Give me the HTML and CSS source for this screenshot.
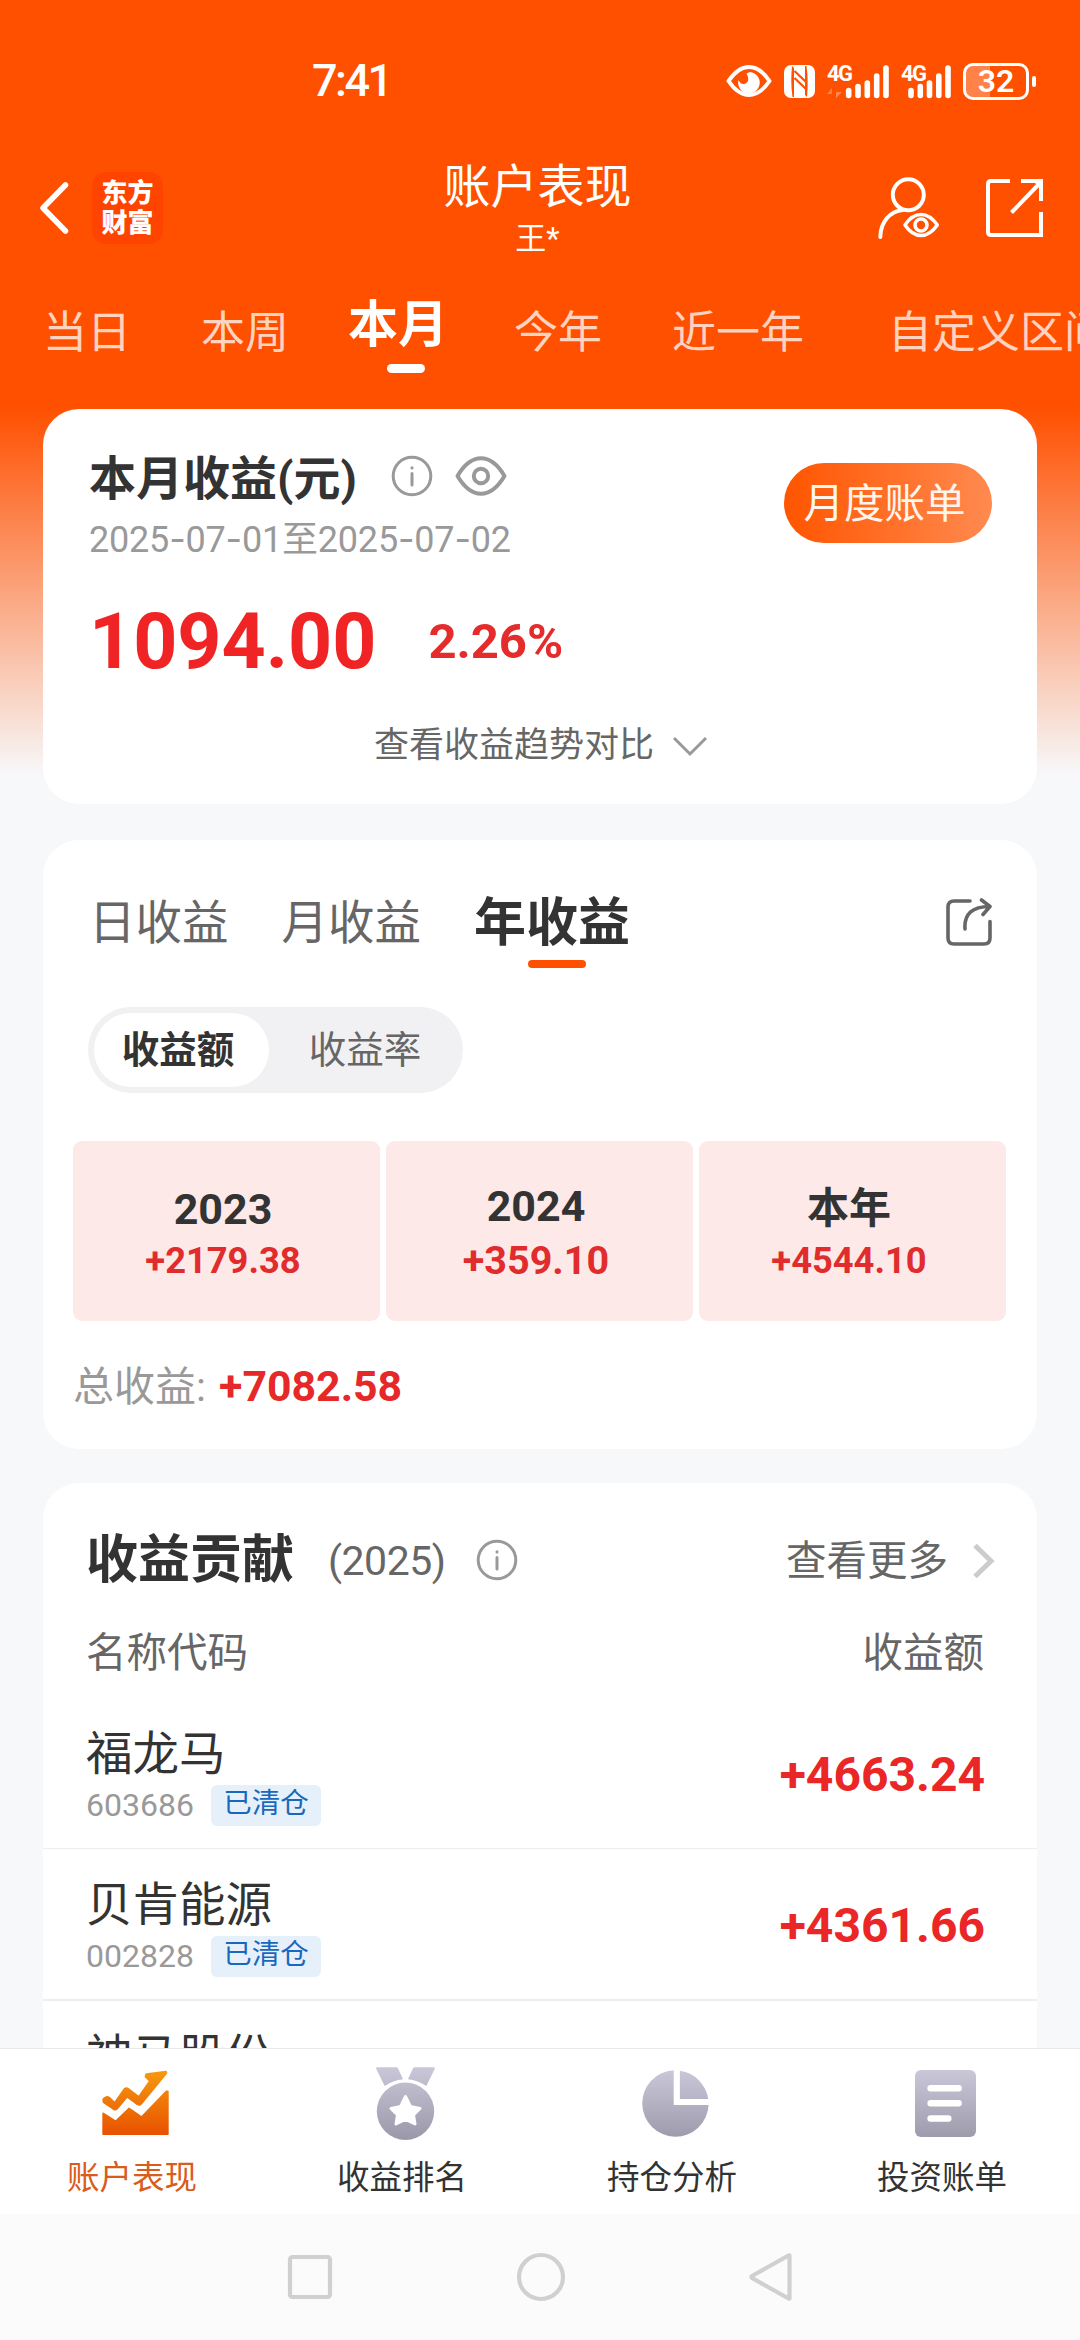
FILE: index.html
```html
<!DOCTYPE html>
<html lang="zh-CN">
<head>
<meta charset="utf-8">
<title>账户表现</title>
<link rel="stylesheet" href="styles.css">
</head>
<body>
<div class="screen">
  <div class="status">
    <span class="clock">7:41</span>
    <div class="status-icons">
      <svg class="st-eye" width="46" height="32" viewBox="0 0 46 32"><path d="M2.500 16Q12 2 23 2T43.500 16Q34 30 23 30T2.500 16Z" fill="none" stroke="#fff" stroke-width="4" stroke-linejoin="round"/><path d="M24 7A10.800 10.800 0 1 1 12.500 15Q15 20.500 19.500 18.500Q24.500 15.500 20.500 8.500Z" fill="#fff"/></svg>
      <svg class="st-nfc" width="31" height="33" viewBox="0 0 31 33"><rect width="31" height="33" rx="7" fill="#fff"/><path d="M8.500 32C7 22 7 11 8 1L10 3V32ZM22.500 1C24 11 24 22 23 32L21 30V1Z" fill="#ff5000"/><path d="M10.500 6L22 17M10.500 13L22 24" stroke="#ff5000" stroke-width="2.200"/></svg>
      <div class="signal data">
        <span>4G</span>
        <svg width="63" height="36" viewBox="0 0 63 36"><path d="M5 35V25L0 31H5ZM9 25V35L15 29H9Z" fill="#fff" opacity=".3"/><path d="M21.700 27.500V32.500M31 23.500V32.500M40.300 20V32.500M49.700 13V32.500M59 5V32.500" stroke="#fff" stroke-width="5.600" stroke-linecap="round"/></svg>
      </div>
      <div class="signal">
        <span>4G</span>
        <svg width="51" height="36" viewBox="0 0 51 36"><path d="M10 27.500V32.500M19.300 23.500V32.500M28.500 20V32.500M37.800 13V32.500M47 5V32.500" stroke="#fff" stroke-width="5.600" stroke-linecap="round"/></svg>
      </div>
      <div class="battery"><span>32</span></div><i class="nub"></i>
    </div>
  </div>

  <div class="titlebar">
    <div class="tb-left">
      <svg width="30" height="54" viewBox="0 0 30 54"><path d="M26.500 4L4 27L26.500 50" fill="none" stroke="#fff" stroke-width="5.500" stroke-linecap="round" stroke-linejoin="round"/></svg>
      <div class="logo">东方<br>财富</div>
    </div>
    <div class="tb-title"><h1>账户表现</h1><p>王*</p></div>
    <div class="tb-right">
      <svg width="62" height="62" viewBox="0 0 62 62" fill="none" stroke="#fff" stroke-width="4" stroke-linecap="round"><circle cx="30.300" cy="17.800" r="15.500"/><path d="M2.300 60C2.500 45 12 34 25 33"/><path d="M27 48Q34 37.500 43 37.500T59.300 48Q52 58.500 43 58.500T27 48Z" stroke-width="3.500" stroke-linejoin="round"/><circle cx="43" cy="48" r="6" stroke-width="3.600"/></svg>
      <svg width="58" height="58" viewBox="0 0 58 58" fill="none" stroke="#fff" stroke-width="4"><path d="M24 2H5Q2 2 2 5V53Q2 56 5 56H55V33M35 2H55V22M25.500 33.500L54 4"/><path d="M47 2H56V11Z" fill="#fff" stroke="none"/></svg>
    </div>
  </div>

  <nav class="range">
    <span>当日</span><span>本周</span><span class="on">本月</span><span>今年</span><span>近一年</span><span class="custom">自定义区间</span>
  </nav>

  <main class="cards">
    <section class="card summary">
      <div class="sum-top">
        <div>
          <div class="sum-title">
            <h2>本月收益(元)</h2>
            <svg class="info" width="42" height="42" viewBox="0 0 42 42" fill="none" stroke="#999" stroke-width="3" stroke-linecap="round"><circle cx="21" cy="21" r="18.800"/><path d="M21 18.500V30M21 12.700V13"/></svg>
            <svg width="52" height="40" viewBox="0 0 52 40" fill="none" stroke="#999" stroke-width="4" stroke-linejoin="round"><path d="M2.500 20Q13 2.300 26 2.300T49.500 20Q39 37.700 26 37.700T2.500 20Z"/><circle cx="26" cy="20" r="7.200"/></svg>
          </div>
          <p class="period">2025<b>-</b>07<b>-</b>01至2025<b>-</b>07<b>-</b>02</p>
        </div>
        <button class="bill">月度账单</button>
      </div>
      <div class="figures"><strong>1094.00</strong><em>2.26%</em></div>
      <div class="trend"><span>查看收益趋势对比</span><svg width="36" height="22" viewBox="0 0 36 22"><path d="M2 3L18 19L34 3" fill="none" stroke="#999" stroke-width="3"/></svg></div>
    </section>

    <section class="card yearly">
      <div class="ptabs">
        <span>日收益</span><span>月收益</span><span class="on">年收益</span>
        <svg width="46" height="48" viewBox="0 0 46 48" fill="none" stroke="#666" stroke-width="3.600" stroke-linecap="round" stroke-linejoin="round"><path d="M24 3H8Q2 3 2 9V40Q2 46 8 46H38Q44 46 44 40V23.500"/><path d="M19 31C18 16 26 8.500 44 8.500M35.500 2L44 8.500L37 16.500"/></svg>
      </div>
      <div class="toggle"><span class="on">收益额</span><span>收益率</span></div>
      <div class="years">
        <div><b>2023</b><em>+2179.38</em></div>
        <div class="mid"><b>2024</b><em>+359.10</em></div>
        <div class="cur"><b>本年</b><em>+4544.10</em></div>
      </div>
      <p class="total">总收益: <em>+7082.58</em></p>
    </section>

    <section class="card contrib">
      <div class="c-head">
        <h2>收益贡献</h2><span class="yr">(2025)</span>
        <svg class="info" width="42" height="42" viewBox="0 0 42 42" fill="none" stroke="#999" stroke-width="3" stroke-linecap="round"><circle cx="21" cy="21" r="18.800"/><path d="M21 18.500V30M21 12.700V13"/></svg>
        <span class="more">查看更多</span>
        <svg width="22" height="36" viewBox="0 0 22 36"><path d="M2 2.500L18 18L2 33.500" fill="none" stroke="#ccc" stroke-width="5"/></svg>
      </div>
      <div class="c-cols"><span>名称代码</span><span>收益额</span></div>
      <div class="row"><div><h3>福龙马</h3><p>603686<i>已清仓</i></p></div><em>+4663.24</em></div>
      <div class="row"><div><h3>贝肯能源</h3><p>002828<i>已清仓</i></p></div><em>+4361.66</em></div>
      <div class="row"><div><h3>神马股份</h3></div></div>
    </section>
  </main>

  <footer class="tabbar">
    <div class="tab on">
      <svg width="67" height="73" viewBox="0 -3 67 73"><defs><linearGradient id="hot" gradientUnits="userSpaceOnUse" x1="0" y1="0" x2="0" y2="65"><stop offset="0" stop-color="#f79a10"/><stop offset="1" stop-color="#e85200"/></linearGradient></defs><g fill="url(#hot)" stroke="url(#hot)" stroke-width="2" stroke-linejoin="round"><path d="M2.300 28.300Q5 26 7.500 28L12.700 33L22.500 19Q24.400 17.500 26.400 19L36.800 27L48 11L43.600 6.500L44.300 4.300L64 1.700L64.300 3L39.200 33.500Q37.500 35.500 35 34L25 26.500L15 38.500Q13 40.500 11 38.500L2 32.500Q.500 30 2.300 28.300Z"/><path d="M1.300 43.500L13.800 51.500L27 38.600L39.700 47.300L64.500 21.500H65.700V64H1.300Z"/></g></svg>
      <span>账户表现</span>
    </div>
    <div class="tab">
      <svg width="59" height="73" viewBox="0 0 59 73"><defs><linearGradient id="cool" gradientUnits="userSpaceOnUse" x1="0" y1="0" x2="0" y2="73"><stop offset="0" stop-color="#cac8d8"/><stop offset="1" stop-color="#9a98a8"/></linearGradient></defs><g fill="url(#cool)"><path d="M1 .300H20Q21.500 .300 22 1.300L27 12.300Q17 13.500 8.700 19L.300 2Q-.200 .500 1 .300ZM58 .300H39Q37.500 .300 37 1.300L32 12.300Q42 13.500 50.300 19L58.700 2Q59.200 .500 58 .300Z"/><circle cx="29.500" cy="44.300" r="28.700"/></g><path d="M29.500 29.500L34.500 39.500L44 41.500L37.500 48L39 57L29.500 52.500L20 57L21.500 48L15 41.500L24.500 39.500Z" fill="#fff" stroke="#fff" stroke-width="3" stroke-linejoin="round"/></svg>
      <span>收益排名</span>
    </div>
    <div class="tab">
      <svg width="67" height="73" viewBox="0 -3 67 73" fill="url(#cool)"><path d="M31.700 .300A33.200 33.200 0 1 0 66.600 35H31.700Z"/><path d="M37.900 .800A33.200 33.200 0 0 1 66.200 29H37.900Z"/></svg>
      <span>持仓分析</span>
    </div>
    <div class="tab">
      <svg width="61" height="73" viewBox="0 -3 61 73"><rect width="61" height="67" rx="6" fill="url(#cool)"/><path d="M15.600 18.300H43.600M15.600 33.300H43.600M15.600 48.500H33.300" stroke="#fff" stroke-width="6.500" stroke-linecap="round"/></svg>
      <span>投资账单</span>
    </div>
  </footer>

  <div class="sysnav">
    <svg width="48" height="50" viewBox="0 0 48 50"><rect x="4" y="5" width="40" height="40" rx="2.500"/></svg>
    <svg width="50" height="50" viewBox="0 0 50 50"><circle cx="25" cy="25" r="22"/></svg>
    <svg width="46" height="50" viewBox="0 0 46 50"><path d="M41.500 3.500V46.500Q41.500 47 40.500 46.500L4 26Q3 25 4 24L40.500 3.500Q41.500 3 41.500 3.500Z"/></svg>
  </div>
</div>
</body>
</html>
```
FILE: styles.css
```css
* { box-sizing: border-box; margin: 0; padding: 0; }
body { font-family: Roboto, "Noto Sans CJK SC", sans-serif; color: #333; background: #f7f8fa; }
svg { display: block; flex: none; }
em, i { font-style: normal; }

.screen {
  width: 1080px; height: 2340px; overflow: hidden;
  display: flex; flex-direction: column;
  background: linear-gradient(#ff5000 0, #ff5000 408px, #f7f8fa 775px);
}

/* status bar */
.status { height: 162px; flex: none; display: flex; align-items: center; justify-content: space-between; padding: 0 44px 0 312px; color: #fff; }
.clock { font-size: 45px; font-weight: 500; letter-spacing: -2.5px; line-height: 50px; }
.status-icons { display: flex; align-items: center; }
.st-nfc { margin-left: 12px; }
.signal { position: relative; margin-left: 11px; }
.signal.data { margin-left: 12px; }
.signal span { position: absolute; left: 0; top: -2px; font-size: 22px; font-weight: 700; line-height: 26px; letter-spacing: -1.5px; }
.battery { width: 66px; height: 37px; margin-left: 11px; border: 3px solid #fff; border-radius: 10px; background: linear-gradient(90deg, #ff8249 0 24px, transparent 24px); display: flex; align-items: center; justify-content: center; font-size: 32px; font-weight: 600; line-height: 32px; }
.nub { width: 4px; height: 11px; margin-left: 3px; border-radius: 2px; background: #fff; }

/* title bar */
.titlebar { height: 92px; flex: none; display: grid; grid-template-columns: 1fr auto 1fr; align-items: center; padding: 0 36px 0 39px; color: #fff; }
.tb-left { display: flex; align-items: center; gap: 23px; }
.logo { width: 71px; height: 72px; border-radius: 14px; background: #ff4400; font-weight: 900; font-size: 26px; line-height: 30px; text-align: center; padding-top: 6px; }
.tb-title { height: 92px; text-align: center; padding-right: 8px; }
.tb-title h1 { font-size: 47px; font-weight: 400; line-height: 50px; }
.tb-title p { font-size: 31px; line-height: 40px; margin-top: 7px; }
.tb-right { display: flex; justify-content: flex-end; align-items: center; gap: 46px; }

/* period tabs */
.range { height: 155px; flex: none; display: flex; align-items: center; gap: 70px; padding: 2px 0 0 43px; font-size: 44px; line-height: 60px; color: #ffd3bf; white-space: nowrap; }
.range .on { position: relative; margin: 0 -4px 15px -11px; font-size: 50px; font-weight: 700; color: #fff; }
.range .on::after { content: ""; position: absolute; left: 39px; top: 69px; width: 38px; height: 9px; border-radius: 5px; background: #fff; }
.range .custom { margin-left: 14px; }

/* cards */
.cards { height: 1639px; flex: none; overflow: hidden; padding: 0 43px; }
.card { background: #fff; border-radius: 36px; }
.summary { height: 395px; padding: 40px 45px 0 46px; }
.sum-top { display: flex; justify-content: space-between; align-items: flex-start; }
.sum-title { display: flex; align-items: center; height: 60px; }
.sum-title h2 { font-size: 47px; line-height: 60px; font-weight: 700; }
.sum-title svg { margin: -6px 0 0 22px; }
.sum-title .info { margin-left: 34px; }
.period { margin-top: 10px; font-size: 36px; line-height: 40px; letter-spacing: -.2px; color: #999; }
.period b { font-family: Inter, sans-serif; font-weight: 400; }
.bill { width: 208px; height: 80px; margin-top: 14px; border: 0; border-radius: 40px; padding: 2px 7px 0 0; background: linear-gradient(90deg, #ff5500, #ff8a50); color: #fff5ec; font: 400 40.5px/78px Roboto, "Noto Sans CJK SC", sans-serif; }
.figures { display: flex; align-items: center; margin-top: 42px; height: 80px; }
.figures strong { font-size: 77px; line-height: 80px; color: #f02424; }
.figures em { margin-left: 52px; font-size: 49px; line-height: 80px; font-weight: 700; color: #e52c2c; }
.trend { display: flex; align-items: center; margin: 44px 0 0 285px; height: 40px; font-size: 35px; line-height: 40px; color: #666; gap: 18px; }

.yearly { height: 609px; margin-top: 36px; padding: 52px 31px 0 30px; }
.ptabs { display: flex; align-items: center; height: 60px; padding: 0 14px 0 16px; font-size: 46.5px; line-height: 60px; color: #666; }
.ptabs span { margin-right: 53px; padding-top: 1px; }
.ptabs .on { position: relative; padding-top: 3px; font-size: 52px; font-weight: 700; color: #333; }
.ptabs .on::after { content: ""; position: absolute; left: 54px; top: 69px; width: 58px; height: 8px; border-radius: 4px; background: #ff5000; }
.ptabs svg { margin-left: auto; }
.toggle { display: flex; width: 375px; height: 86px; margin: 55px 0 0 15px; padding: 6px; border-radius: 43px; background: #f1f1f3; font-size: 37.5px; line-height: 75px; color: #666; }
.toggle span { width: 186px; text-align: center; padding-left: 6px; }
.toggle .on { width: 175px; border-radius: 37px; background: #fff; color: #333; font-weight: 700; padding: 0 7px 0 0; }
.years { display: grid; grid-template-columns: repeat(3, 1fr); gap: 6px; height: 180px; margin-top: 48px; }
.years div { border-radius: 9px; background: #fce9e8; text-align: center; padding: 44px 7px 0 0; display: flex; flex-direction: column; }
.years b { font-size: 43px; line-height: 48px; }
.years em { margin-top: 3px; font-size: 36.3px; line-height: 50px; font-weight: 700; color: #e02c2c; }
.years .mid { padding-top: 41px; }
.years .mid em { margin-top: 6px; font-size: 39.5px; }
.years .cur b { font-size: 42px; }
.total { margin: 40px 0 0 0; font-size: 41px; line-height: 51px; color: #999; }
.total em { margin-left: 3px; font-size: 42.8px; font-weight: 700; color: #e62828; }

.contrib { height: 700px; margin-top: 34px; padding-top: 48px; }
.c-head { display: flex; align-items: center; height: 60px; padding: 0 42px 0 43px; line-height: 60px; }
.c-head h2 { font-size: 52px; }
.c-head .yr { margin-left: 34px; font-size: 41px; letter-spacing: -.5px; color: #666; }
.c-head .info { margin: -3px 0 0 30px; }
.c-head .more { margin-left: auto; margin-right: 25px; font-size: 40.5px; color: #666; }
.c-cols { display: flex; justify-content: space-between; margin-top: 37px; padding: 0 53px 0 43px; font-size: 40.5px; line-height: 50px; color: #666; }
.row { display: flex; justify-content: space-between; height: 152px; padding: 29px 52px 0 43px; border-bottom: 2px solid #ededef; }
.c-cols + .row { padding-top: 30px; margin-top: 19px; border-bottom-width: 1px; }
.row h3 { font-size: 46.5px; line-height: 54px; font-weight: 400; }
.row p { display: flex; align-items: center; margin-top: 4px; font-size: 32px; line-height: 41px; color: #999; }
.row i { width: 110px; height: 41px; margin-left: 17px; border-radius: 6px; background: #e5f0fa; color: #1a68bd; font-size: 28.5px; line-height: 37px; text-align: center; }
.row em { margin-top: 18px; font-size: 48px; line-height: 60px; font-weight: 700; color: #ea2626; }

/* bottom tabs */
.tabbar { height: 166px; flex: none; display: grid; grid-template-columns: repeat(4, 1fr); background: #fff; border-top: 1px solid #e9e9eb; }
.tab { display: flex; flex-direction: column; align-items: center; padding-top: 18px; font-size: 32.5px; line-height: 40px; }
.tab span { margin-top: 18px; padding-right: 6px; }
.tab.on span { color: #d95c1c; }

/* system navigation */
.sysnav { flex: 1; display: flex; align-items: center; justify-content: center; gap: 182px; background: #fbfbfb; }
.sysnav svg { fill: none; stroke: #d0d0d0; stroke-width: 4.2; stroke-linejoin: round; }
```
